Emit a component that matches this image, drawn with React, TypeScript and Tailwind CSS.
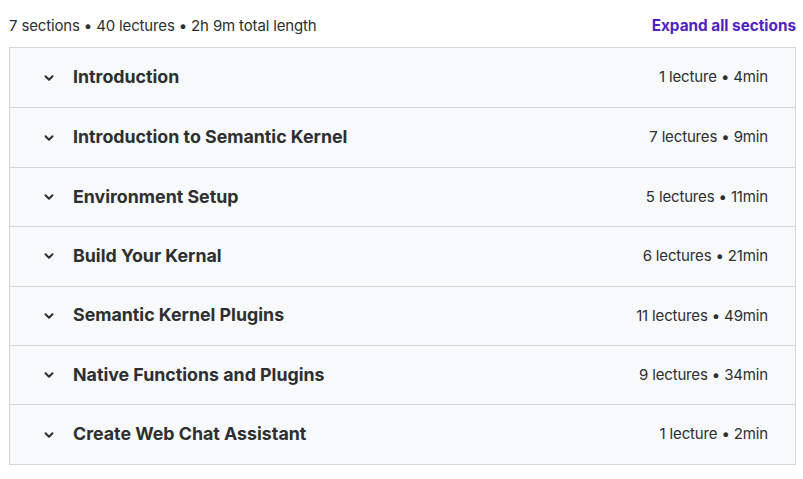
import React from 'react';

type Section = {
  title: string;
  meta: string;
};

const sections: Section[] = [
  { title: 'Introduction', meta: '1 lecture • 4min' },
  { title: 'Introduction to Semantic Kernel', meta: '7 lectures • 9min' },
  { title: 'Environment Setup', meta: '5 lectures • 11min' },
  { title: 'Build Your Kernal', meta: '6 lectures • 21min' },
  { title: 'Semantic Kernel Plugins', meta: '11 lectures • 49min' },
  { title: 'Native Functions and Plugins', meta: '9 lectures • 34min' },
  { title: 'Create Web Chat Assistant', meta: '1 lecture • 2min' },
];

function Chevron() {
  return (
    <svg width="12" height="12" viewBox="0 0 12 12" fill="none" className="shrink-0">
      <path d="M2.5 4.25 6 7.75l3.5-3.5" stroke="#2d2f31" strokeWidth="2" strokeLinecap="round" strokeLinejoin="round" />
    </svg>
  );
}

export default function App() {
  return (
    <div
      className="w-[803px] h-[479px] bg-white px-[9px] pt-[15px] text-[#2d2f31]"
      style={{ fontFamily: 'Inter, "Noto Sans", sans-serif' }}
    >
      {/* Course content summary */}
      <div className="flex items-center justify-between h-[22px] mb-[10px]">
        <span className="text-[15px] tracking-[-0.15px]">7 sections • 40 lectures • 2h 9m total length</span>
        <button className="text-[15.3px] font-bold text-[#5022c3] -mr-[2px]">Expand all sections</button>
      </div>

      {/* Section list */}
      <div className="w-[787px] border border-[#d1d7dc]">
        {sections.map((s, i) => (
          <div
            key={s.title}
            className={`flex items-center h-[59.4px] bg-[#f7f9fa] pl-[33px] pr-[27px] ${
              i > 0 ? 'border-t border-[#d1d7dc]' : ''
            }`}
          >
            <Chevron />
            <span className="ml-[18px] text-[17.8px] font-bold">{s.title}</span>
            <span className="ml-auto text-[15px] tracking-[-0.15px] text-[#2d2f31]">{s.meta}</span>
          </div>
        ))}
      </div>
    </div>
  );
}
